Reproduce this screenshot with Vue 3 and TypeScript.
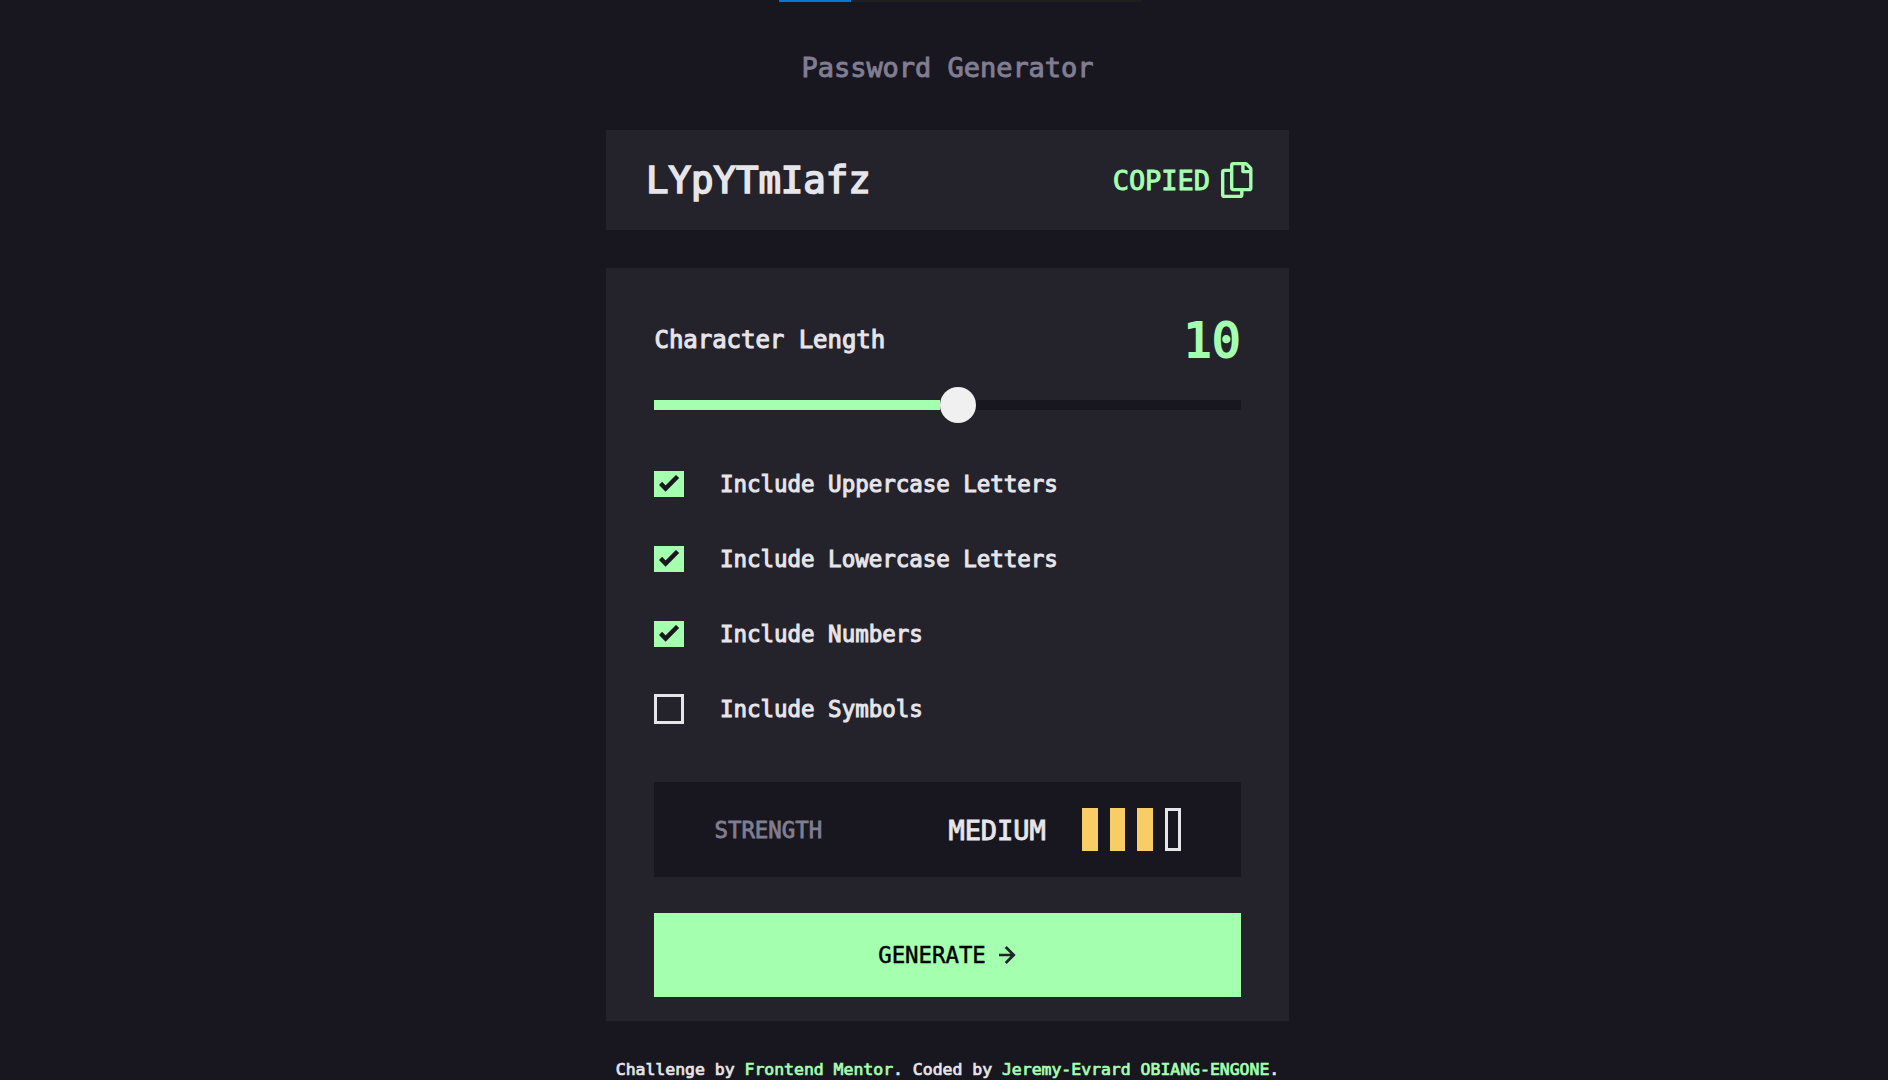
<script setup lang="ts">
import { computed, ref } from 'vue'

interface Option {
  label: string
  checked: boolean
}

const password = ref('LYpYTmIafz')
const copied = ref(true)
const length = ref(10)
const maxLength = 20
const options = ref<Option[]>([
  { label: 'Include Uppercase Letters', checked: true },
  { label: 'Include Lowercase Letters', checked: true },
  { label: 'Include Numbers', checked: true },
  { label: 'Include Symbols', checked: false },
])

const levels = ['TOO WEAK!', 'WEAK', 'MEDIUM', 'STRONG']
const strength = computed(() => options.value.filter((o) => o.checked).length)
const strengthLabel = computed(() => levels[Math.max(strength.value - 1, 0)])
const filled = computed(() => `calc((100% - 36px) * ${length.value / maxLength} + 10.5px)`)
</script>

<template>
  <div class="page">
    <div class="progress"><div class="progress-value"></div></div>
    <main class="generator">
      <h1 class="title">Password Generator</h1>

      <section class="output">
        <span class="password">{{ password }}</span>
        <div class="copy">
          <span v-if="copied" class="copied">COPIED</span>
          <svg class="copy-icon" viewBox="0 0 21 24" width="31.5" height="36">
            <path
              fill="currentColor"
              d="M20.341 3.091 17.909.659A2.25 2.25 0 0 0 16.319 0H8.25A2.25 2.25 0 0 0 6 2.25V4.5H2.25A2.25 2.25 0 0 0 0 6.75v15A2.25 2.25 0 0 0 2.25 24h10.5A2.25 2.25 0 0 0 15 21.75V19.5h3.75A2.25 2.25 0 0 0 21 17.25V4.682a2.25 2.25 0 0 0-.659-1.591ZM12.469 21.75H2.53a.281.281 0 0 1-.281-.281V7.03a.281.281 0 0 1 .281-.281H6v10.5a2.25 2.25 0 0 0 2.25 2.25h4.5v1.969a.282.282 0 0 1-.281.281Zm6-4.5H8.53a.281.281 0 0 1-.281-.281V2.53a.281.281 0 0 1 .281-.281H13.5v4.125c0 .621.504 1.125 1.125 1.125h4.125v9.469a.282.282 0 0 1-.281.281Zm.281-12h-3v-3h.451c.075 0 .147.03.2.082L18.667 4.6a.283.283 0 0 1 .082.199v.451Z"
            />
          </svg>
        </div>
      </section>

      <section class="settings">
        <div class="length-row">
          <span class="length-label">Character Length</span>
          <span class="length-value">{{ length }}</span>
        </div>

        <div class="slider">
          <div class="track"></div>
          <div class="fill" :style="{ width: filled }"></div>
          <div class="thumb"></div>
        </div>

        <ul class="options">
          <li v-for="option in options" :key="option.label" class="option">
            <span v-if="option.checked" class="box checked">
              <svg viewBox="0 0 14 12" width="21" height="18">
                <path d="M1 5.607 4.393 9l8-8" fill="none" stroke="#18171f" stroke-width="3" />
              </svg>
            </span>
            <span v-else class="box empty"></span>
            <span class="option-label">{{ option.label }}</span>
          </li>
        </ul>

        <div class="strength">
          <span class="strength-title">STRENGTH</span>
          <div class="strength-level">
            <span class="strength-name">{{ strengthLabel }}</span>
            <div class="bars">
              <span v-for="n in 4" :key="n" class="bar" :class="{ on: n <= strength }"></span>
            </div>
          </div>
        </div>

        <button class="generate" type="button">
          <span>GENERATE</span>
          <svg viewBox="0 0 12 12" width="18" height="18">
            <path fill="#24232c" d="m5.106 12 6-6-6-6-1.265 1.265 3.841 3.84H.001v1.79h7.681l-3.841 3.84z" />
          </svg>
        </button>
      </section>

      <footer class="attribution">
        Challenge by <a>Frontend Mentor</a>. Coded by <a>Jeremy-Evrard OBIANG-ENGONE</a>.
      </footer>
    </main>
  </div>
</template>

<style>
body {
  background: #18171f;
  overflow: hidden;
}
</style>

<style scoped>
.page {
  box-sizing: border-box;
  height: 1080px;
  overflow: hidden;
  background: #18171f;
  color: #e6e5ea;
  font-family: 'DejaVu Sans Mono', 'Liberation Mono', monospace;
  letter-spacing: -0.002em;
  white-space: nowrap;
}

.title,
.strength-title,
.strength-name,
.copied {
  -webkit-text-stroke: 0.035em currentColor;
}

.password,
.length-label,
.option-label,
.attribution {
  -webkit-text-stroke: 0.045em currentColor;
}

.progress {
  width: 363px;
  height: 2px;
  margin-left: 779px;
  background: #1f1f1f;
}

.progress-value {
  width: 72px;
  height: 2px;
  background: #0078d4;
}

.generator {
  width: 683px;
  margin-left: 606px;
}

.title {
  margin: 0;
  padding-top: 48px;
  height: 80px;
  line-height: 36px;
  font-size: 27px;
  font-weight: 400;
  text-align: center;
  color: #817d92;
}

.output {
  display: flex;
  align-items: center;
  justify-content: space-between;
  box-sizing: border-box;
  height: 100px;
  padding: 0 36.5px 0 40px;
  background: #24232c;
}

.password {
  font-size: 37.4px;
}

.copy {
  display: flex;
  align-items: center;
  gap: 11px;
  color: #a4ffaf;
}

.copied {
  font-size: 27px;
}

.copy-icon {
  display: block;
}

.settings {
  box-sizing: border-box;
  height: 753px;
  margin-top: 38px;
  padding: 48px 48px 24px;
  background: #24232c;
}

.length-row {
  display: flex;
  align-items: center;
  justify-content: space-between;
  height: 48px;
}

.length-label {
  margin-left: 0.5px;
  font-size: 24px;
}

.length-value {
  margin-right: 0.5px;
  padding-top: 2px;
  font-size: 47.5px;
  line-height: 48px;
  color: #a4ffaf;
  -webkit-text-stroke: 0.04em currentColor;
}

.slider {
  display: flex;
  align-items: center;
  position: relative;
  height: 36px;
  margin-top: 23px;
}

.track {
  width: 100%;
  height: 10px;
  background: #18171f;
}

.fill {
  position: absolute;
  left: 0;
  height: 10px;
  background: #a4ffaf;
}

.thumb {
  position: absolute;
  left: 286px;
  width: 36px;
  height: 36px;
  border-radius: 50%;
  background: #f0f0f0;
}

.options {
  display: flex;
  flex-direction: column;
  gap: 45px;
  margin: 46px 0 0;
  padding: 0;
  list-style: none;
}

.option {
  display: flex;
  align-items: center;
  gap: 36px;
  height: 30px;
  font-size: 22.5px;
}

.box {
  display: flex;
  align-items: center;
  justify-content: center;
  box-sizing: border-box;
  width: 30px;
}

.checked {
  height: 26px;
  background: #a4ffaf;
}

.empty {
  height: 30px;
  border: 3px solid #e6e5ea;
}

.strength {
  display: flex;
  align-items: center;
  justify-content: space-between;
  box-sizing: border-box;
  height: 95px;
  margin-top: 58px;
  padding: 0 60.25px 0 60.5px;
  background: #18171f;
}

.strength-title {
  font-size: 22.4px;
  color: #817d92;
}

.strength-level {
  display: flex;
  align-items: center;
  gap: 36px;
}

.strength-name {
  padding-top: 2px;
  font-size: 27px;
}

.bars {
  display: flex;
  gap: 12px;
}

.bar {
  box-sizing: border-box;
  width: 15.75px;
  height: 43px;
  border: 3px solid #e6e5ea;
}

.bar.on {
  border-color: #f8cd65;
  background: #f8cd65;
}

.generate {
  display: flex;
  align-items: center;
  justify-content: center;
  gap: 13px;
  width: 100%;
  height: 84px;
  margin-top: 36px;
  padding: 0;
  border: 0;
  background: #a4ffaf;
  color: #000;
  font-family: inherit;
  font-size: 22.4px;
  letter-spacing: inherit;
  -webkit-text-stroke: 0.02em currentColor;
}

.attribution {
  margin-top: 37px;
  font-size: 16.5px;
  line-height: 24px;
  text-align: center;
}

.attribution a {
  color: #a4ffaf;
  -webkit-text-stroke-color: #a4ffaf;
}
</style>
